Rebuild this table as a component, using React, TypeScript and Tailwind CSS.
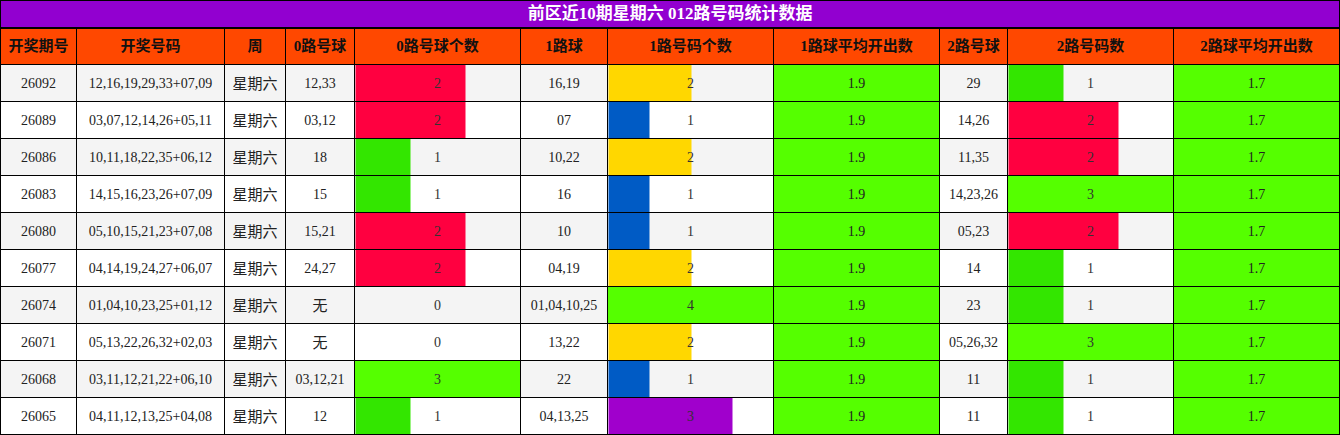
import * as React from "react";

type Row = {
  qh: string;
  hm: string;
  r0: string;
  c0: number;
  r1: string;
  c1: number;
  r2: string;
  c2: number;
};

const rows: Row[] = [
  { qh: "26092", hm: "12,16,19,29,33+07,09", r0: "12,33", c0: 2, r1: "16,19", c1: 2, r2: "29", c2: 1 },
  { qh: "26089", hm: "03,07,12,14,26+05,11", r0: "03,12", c0: 2, r1: "07", c1: 1, r2: "14,26", c2: 2 },
  { qh: "26086", hm: "10,11,18,22,35+06,12", r0: "18", c0: 1, r1: "10,22", c1: 2, r2: "11,35", c2: 2 },
  { qh: "26083", hm: "14,15,16,23,26+07,09", r0: "15", c0: 1, r1: "16", c1: 1, r2: "14,23,26", c2: 3 },
  { qh: "26080", hm: "05,10,15,21,23+07,08", r0: "15,21", c0: 2, r1: "10", c1: 1, r2: "05,23", c2: 2 },
  { qh: "26077", hm: "04,14,19,24,27+06,07", r0: "24,27", c0: 2, r1: "04,19", c1: 2, r2: "14", c2: 1 },
  { qh: "26074", hm: "01,04,10,23,25+01,12", r0: "无", c0: 0, r1: "01,04,10,25", c1: 4, r2: "23", c2: 1 },
  { qh: "26071", hm: "05,13,22,26,32+02,03", r0: "无", c0: 0, r1: "13,22", c1: 2, r2: "05,26,32", c2: 3 },
  { qh: "26068", hm: "03,11,12,21,22+06,10", r0: "03,12,21", c0: 3, r1: "22", c1: 1, r2: "11", c2: 1 },
  { qh: "26065", hm: "04,11,12,13,25+04,08", r0: "12", c0: 1, r1: "04,13,25", c1: 3, r2: "11", c2: 1 },
];

const heads = [
  "开奖期号",
  "开奖号码",
  "周",
  "0路号球",
  "0路号球个数",
  "1路球",
  "1路号码个数",
  "1路球平均开出数",
  "2路号球",
  "2路号码数",
  "2路球平均开出数",
];

const widths = [76, 148, 61, 69, 166, 87, 166, 166, 68, 166, 166];

// colour by filled share of the cell
const barColor = (pct: number) => {
  if (pct >= 100) return "#55ff00";
  if (pct >= 74) return "#a000cc";
  if (pct >= 66) return "#ff0040";
  if (pct >= 50) return "#ffd700";
  if (pct >= 33) return "#33e600";
  return "#005bc5";
};

const BarCell = (props: { n: number; max: number }) => {
  const { n, max } = props;
  const pct = (n / max) * 100;
  const style =
    n > 0
      ? { background: `linear-gradient(to right, ${barColor(pct)} ${pct}%, transparent ${pct}%)` }
      : undefined;
  return (
    <td className="border border-black text-center text-[#333]" style={style}>
      {n}
    </td>
  );
};

const App = () => {
  const serif = "font-['Liberation_Serif','Noto_Sans_CJK_SC',serif]";
  return (
    <div className="w-[1340px] h-[435px] bg-white">
      <table className={`table-fixed border-collapse w-[1340px] ${serif}`}>
        <colgroup>
          {widths.map((w, i) => (
            <col key={i} style={{ width: w }} />
          ))}
        </colgroup>
        <thead>
          <tr className="h-[27px]">
            <th
              colSpan={11}
              className="border border-black border-b-2 bg-[#9200d0] text-white text-[17px] font-bold leading-none"
            >
              前区近10期星期六 012路号码统计数据
            </th>
          </tr>
          <tr className="h-[37px] bg-[#ff4800]">
            {heads.map((h) => (
              <th key={h} className="border border-black text-[15px] font-bold text-[#111]">
                {h}
              </th>
            ))}
          </tr>
        </thead>
        <tbody>
          {rows.map((r, i) => (
            <tr key={r.qh} className={`h-[37px] text-[14px] text-[#222] ${i % 2 === 0 ? "bg-[#f4f4f4]" : "bg-white"}`}>
              <td className="border border-black text-center">{r.qh}</td>
              <td className="border border-black text-center">{r.hm}</td>
              <td className="border border-black text-center text-[15px] font-['Noto_Sans_CJK_SC',sans-serif]">
                星期六
              </td>
              <td
                className={`border border-black text-center ${
                  r.r0 === "无" ? "text-[15px] font-['Noto_Sans_CJK_SC',sans-serif]" : ""
                }`}
              >
                {r.r0}
              </td>
              <BarCell n={r.c0} max={3} />
              <td className="border border-black text-center">{r.r1}</td>
              <BarCell n={r.c1} max={4} />
              <td className="border border-black text-center bg-[#55ff00]">1.9</td>
              <td className="border border-black text-center">{r.r2}</td>
              <BarCell n={r.c2} max={3} />
              <td className="border border-black text-center bg-[#55ff00]">1.7</td>
            </tr>
          ))}
        </tbody>
      </table>
    </div>
  );
};

export default App;
